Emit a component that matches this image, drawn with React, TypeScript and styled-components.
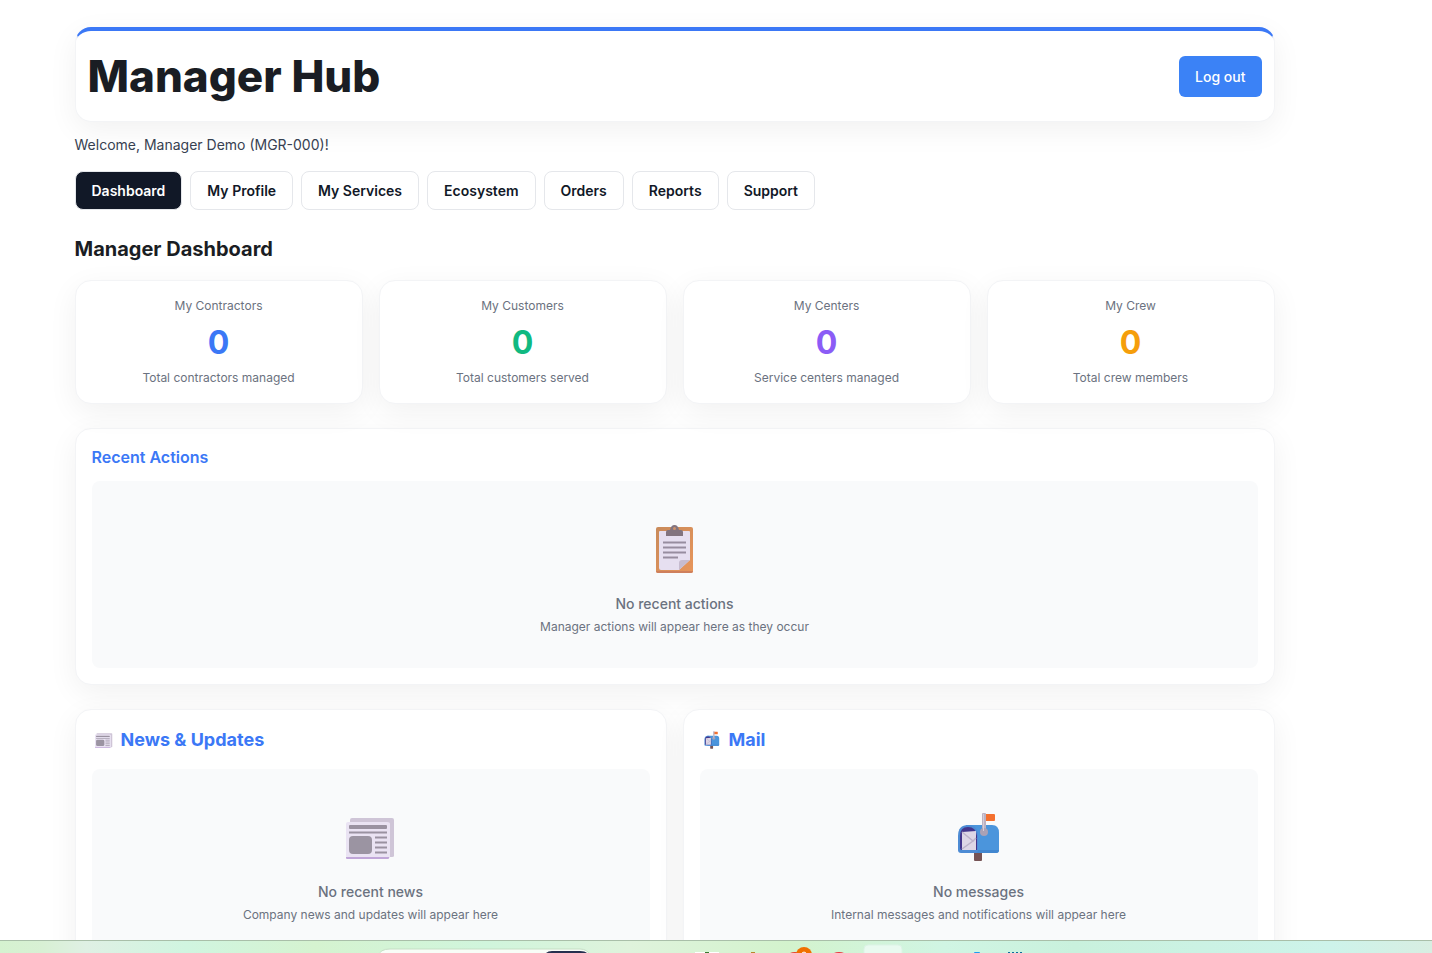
import React from "react";
import styled, { createGlobalStyle } from "styled-components";

const GlobalStyle = createGlobalStyle`
  *, *::before, *::after { box-sizing: border-box; }
  body {
    margin: 0;
    background: #ffffff;
    color: #1a1d23;
    font-family: Inter, "Liberation Sans", sans-serif;
    font-size: 14px;
    line-height: 21px;
  }
  h1, h2, h3, p { margin: 0; }
`;

const Screen = styled.div`
  height: 100vh;
  display: grid;
  grid-template-rows: minmax(0, 1fr) auto;
`;

const Viewport = styled.div`
  overflow: hidden;
  padding: 27px 83px 0 0;
`;

const Page = styled.main`
  max-width: 1200px;
  margin: 0 auto;
`;

const Surface = styled.section`
  background: #ffffff;
  border: 1px solid #f3f4f6;
  border-radius: 16px;
  box-shadow: 0 8px 30px rgba(0, 0, 0, 0.06);
`;

const Header = styled(Surface).attrs({ as: "header" })`
  display: flex;
  align-items: center;
  justify-content: space-between;
  padding: 12px;
  border-top: 4px solid #3b78f6;
`;

const Title = styled.h1`
  font-size: 44px;
  line-height: 66px;
  font-weight: 800;
`;

const LogoutButton = styled.button`
  padding: 10px 16px;
  border: 0;
  border-radius: 6px;
  background: #3b82f6;
  color: #ffffff;
  font: inherit;
  font-weight: 500;
`;

const Welcome = styled.p`
  margin-top: 12px;
  color: #374151;
`;

const Tabs = styled.nav`
  display: flex;
  flex-wrap: wrap;
  gap: 8px;
  margin-top: 16px;
`;

const Tab = styled.button<{ $active?: boolean }>`
  padding: 8px 16px;
  border: 1px solid #e5e7eb;
  border-radius: 8px;
  background: ${(p) => (p.$active ? "#111827" : "#ffffff")};
  color: ${(p) => (p.$active ? "#ffffff" : "#111827")};
  font: inherit;
  font-weight: 600;
`;

const SectionTitle = styled.h2`
  margin: 24px 0 16px;
  font-size: 20px;
  line-height: 30px;
  font-weight: 700;
`;

const StatGrid = styled.div`
  display: grid;
  grid-template-columns: repeat(4, 1fr);
  gap: 16px;
`;

const StatCard = styled(Surface)`
  padding: 16px;
  text-align: center;
`;

const Caption = styled.p`
  color: #6b7280;
  font-size: 12px;
  line-height: 18px;
`;

const StatValue = styled.p<{ $color: string }>`
  margin: 4px 0 2px;
  color: ${(p) => p.$color};
  font-size: 32px;
  line-height: 48px;
  font-weight: 700;
`;

const Panel = styled(Surface)`
  padding: 16px;
`;

const ActionsPanel = styled(Panel)`
  margin: 24px 0;
`;

const PanelGrid = styled.div`
  display: grid;
  grid-template-columns: repeat(2, 1fr);
  gap: 16px;
`;

const ActionsTitle = styled.h3`
  margin-bottom: 12px;
  color: #3b78f6;
  font-size: 16px;
  line-height: 24px;
  font-weight: 600;
`;

const PanelTitle = styled.h3`
  display: flex;
  align-items: center;
  gap: 8px;
  margin-bottom: 16px;
  padding-left: 3px;
  color: #3b78f6;
  font-size: 18px;
  line-height: 27px;
  font-weight: 700;
`;

const EmptyBox = styled.div`
  display: flex;
  flex-direction: column;
  align-items: center;
  padding: 32px;
  border-radius: 8px;
  background: #f9fafb;
`;

const EmptyIcon = styled.div`
  display: flex;
  align-items: center;
  height: 72px;
  margin-bottom: 8px;
`;

const EmptyTitle = styled.p`
  margin-bottom: 4px;
  color: #6b7280;
  font-weight: 500;
`;

const Taskbar = styled.footer`
  display: flex;
  justify-content: center;
  height: 13px;
  overflow: hidden;
  border-top: 1px solid #a9bfa9;
  background: linear-gradient(
    90deg,
    #d5f2d0 0%,
    #d8f0d4 3%,
    #dff0e4 6%,
    #d0f5e0 13%,
    #d5f3d0 22%,
    #d0f5dc 34%,
    #dff3dc 44%,
    #d3f3cd 55%,
    #d0f5e3 66%,
    #c9f1dd 75%,
    #cdf3ea 93%,
    #d8eee2 100%
  );
`;

const TaskIcons = styled.svg`
  flex: none;
  display: block;
`;

type IconProps = { size: number };

const ClipboardIcon = ({ size }: IconProps) => (
  <svg width={size} height={size} viewBox="0 0 50 50" aria-hidden="true">
    <defs>
      <linearGradient id="board" x1="0" y1="0" x2="1" y2="1">
        <stop offset="0" stopColor="#c98a5a" />
        <stop offset="1" stopColor="#e8955a" />
      </linearGradient>
    </defs>
    <rect x="6" y="3" width="37" height="46" rx="2" fill="url(#board)" />
    <path d="M6 47h37q0 2-2 2H8q-2 0-2-2z" fill="#cf7f5c" />
    <path d="M10 7h29q1 0 1 1v28L29 46H11q-2 0-2-2V8q0-1 1-1z" fill="#e6dff0" />
    <path d="M29 46v-7q0-3 3-3h8z" fill="#c6bbcf" />
    <path d="M16 12V8q0-2 2-2h2q1-5 4.500-5t4.500 5h2q2 0 2 2v4z" fill="#82747f" />
    <circle cx="24.500" cy="4.500" r="1.500" fill="#d0926a" />
    <path d="M13 18.500h23M13 23.500h23M13 28.500h23M13 33.500h15" stroke="#978d9f" strokeWidth="2" />
  </svg>
);

const NewspaperIcon = ({ size }: IconProps) => (
  <svg width={size} height={size} viewBox="0 0 50 50" aria-hidden="true">
    <path d="M4 8q0-2 2-2h40q2 0 2 2v36q0 1-2 1h-4V11H4z" fill="#cfc5d7" />
    <path d="M0 12q0-2 2-2h39q3 0 3 2v34H2q-2 0-2-2z" fill="#eae3f3" />
    <path d="M0 45h43v1q0 1-1 1H1q-1 0-1-1z" fill="#c0a6d8" />
    <rect x="3" y="13" width="38" height="4" rx="1" fill="#9a92a1" />
    <path d="M3 20.500h38" stroke="#9a92a1" strokeWidth="2" />
    <rect x="3" y="24" width="23" height="18" rx="4" fill="#9b94a2" />
    <path d="M29 25.500h12M29 30.500h12M29 35.500h12M29 40.500h12" stroke="#9a92a1" strokeWidth="2" />
  </svg>
);

const MailboxIcon = ({ size }: IconProps) => (
  <svg width={size} height={size} viewBox="0 0 50 50" aria-hidden="true">
    <rect x="20" y="38" width="8" height="11" rx="1" fill="#765355" />
    <path d="M12 13h26q7 0 7 8v17q0 3-3 3H12z" fill="#4b95dc" />
    <path d="M22 38h23q0 3-3 3H20z" fill="#4287d0" />
    <path d="M4 24q0-11 10-11t10 11v14q0 3-3 3H7q-3 0-3-3z" fill="#4d8bd4" />
    <path d="M6 24q0-9 8-9t9 9v14H8q-2 0-2-2z" fill="#43358c" />
    <path d="M8 20l14-1v19H8z" fill="#ddd6e6" />
    <path d="M8 20l11 9-11 8" fill="none" stroke="#bcb2ca" strokeWidth="1.500" />
    <path d="M19 29l3-3" stroke="#bcb2ca" strokeWidth="1.500" />
    <rect x="30" y="2" width="11" height="7" rx="1" fill="#f4702f" />
    <rect x="28" y="1" width="4" height="19" rx="1" fill="#bcb2c2" />
    <circle cx="30" cy="20" r="4" fill="#aaa1b5" />
    <path d="M29.500 2v17" stroke="#d5cdd8" strokeWidth="1" />
  </svg>
);

const stats = [
  { label: "My Contractors", note: "Total contractors managed", color: "#3b78f6" },
  { label: "My Customers", note: "Total customers served", color: "#10b981" },
  { label: "My Centers", note: "Service centers managed", color: "#8b5cf6" },
  { label: "My Crew", note: "Total crew members", color: "#f59e0b" },
];

const tabs = ["Dashboard", "My Profile", "My Services", "Ecosystem", "Orders", "Reports", "Support"];

type EmptyProps = { icon: React.ReactNode; title: string; note: string };

const EmptyState = ({ icon, title, note }: EmptyProps) => (
  <EmptyBox>
    <EmptyIcon>{icon}</EmptyIcon>
    <EmptyTitle>{title}</EmptyTitle>
    <Caption>{note}</Caption>
  </EmptyBox>
);

export default function App() {
  return (
    <Screen>
      <GlobalStyle />
      <Viewport>
        <Page>
          <Header>
            <Title>Manager Hub</Title>
            <LogoutButton type="button">Log out</LogoutButton>
          </Header>
          <Welcome>Welcome, Manager Demo (MGR-000)!</Welcome>
          <Tabs aria-label="Manager sections">
            {tabs.map((tab, i) => (
              <Tab key={tab} type="button" $active={i === 0} aria-current={i === 0 ? "page" : undefined}>
                {tab}
              </Tab>
            ))}
          </Tabs>
          <SectionTitle>Manager Dashboard</SectionTitle>
          <StatGrid>
            {stats.map((s) => (
              <StatCard key={s.label}>
                <Caption>{s.label}</Caption>
                <StatValue $color={s.color}>0</StatValue>
                <Caption>{s.note}</Caption>
              </StatCard>
            ))}
          </StatGrid>
          <ActionsPanel>
            <ActionsTitle>Recent Actions</ActionsTitle>
            <EmptyState
              icon={<ClipboardIcon size={50} />}
              title="No recent actions"
              note="Manager actions will appear here as they occur"
            />
          </ActionsPanel>
          <PanelGrid>
            <Panel>
              <PanelTitle>
                <NewspaperIcon size={18} />
                News &amp; Updates
              </PanelTitle>
              <EmptyState
                icon={<NewspaperIcon size={50} />}
                title="No recent news"
                note="Company news and updates will appear here"
              />
            </Panel>
            <Panel>
              <PanelTitle>
                <MailboxIcon size={18} />
                Mail
              </PanelTitle>
              <EmptyState
                icon={<MailboxIcon size={50} />}
                title="No messages"
                note="Internal messages and notifications will appear here"
              />
            </Panel>
          </PanelGrid>
        </Page>
      </Viewport>
      <Taskbar>
        <TaskIcons width="680" height="12" viewBox="376 941 680 12" aria-hidden="true">
          <path d="M378 956q2-7 12-7h190q8 0 10 7z" fill="#f8fdf7" stroke="#c5dfc5" />
          <path d="M546 953q2-2 6-2h28q5 0 7 2z" fill="#26304f" />
          <rect x="695" y="952" width="24" height="4" fill="#ffffff" />
          <rect x="705" y="952" width="4" height="2" fill="#397a31" />
          <rect x="751" y="952" width="4" height="2" fill="#b9862c" />
          <ellipse cx="795" cy="955" rx="7" ry="3" fill="#e8402f" />
          <circle cx="804" cy="955" r="8" fill="#f07000" />
          <path d="M802 953q2-2 4 0" stroke="#ffffff" fill="none" />
          <ellipse cx="839" cy="955" rx="7" ry="3" fill="#e8363d" />
          <rect x="864" y="945" width="38" height="14" rx="4" fill="#e9faf0" stroke="#dcf3e6" />
          <rect x="974" y="952" width="6" height="2" rx="1" fill="#1d9cf0" />
          <path d="M1009 952v2m4-2v2m4-2v2m4-2v2" stroke="#0d6d9c" strokeWidth="2" />
        </TaskIcons>
      </Taskbar>
    </Screen>
  );
}
